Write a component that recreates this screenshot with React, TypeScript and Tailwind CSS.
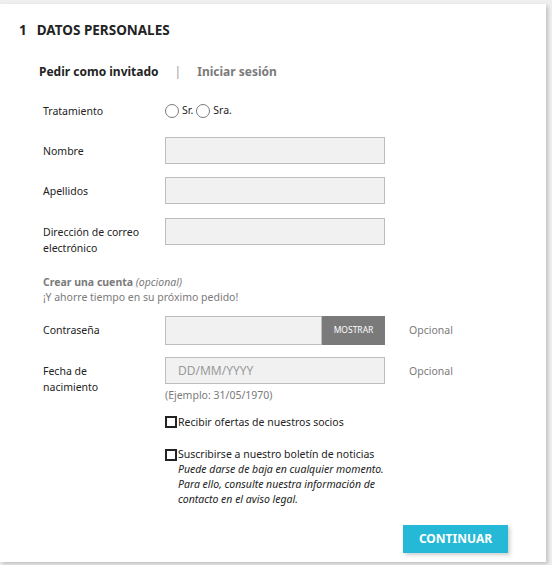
import React from 'react';

const font = { fontFamily: '"Noto Sans", "Open Sans", sans-serif' };

function Row({ label, children, extra, className = '' }: { label: React.ReactNode; children: React.ReactNode; extra?: React.ReactNode; className?: string }) {
  return (
    <div className={`flex items-start ${className}`}>
      <div className="w-[122px] shrink-0 pt-[6px] text-[10.5px] leading-[16px] text-[#232323]">{label}</div>
      <div className="w-[220px] shrink-0">{children}</div>
      {extra ? <div className="pl-[24px] pt-[6px] text-[10.5px] leading-[16px] text-[#7a7a7a]">{extra}</div> : null}
    </div>
  );
}

function Field({ placeholder }: { placeholder?: string }) {
  return (
    <div className="flex h-[27px] w-[220px] items-center border border-[#bdbdbd] bg-[#f1f1f1] px-[12px] text-[12px] text-[#9a9a9a]">
      {placeholder}
    </div>
  );
}

function Radio({ label }: { label: string }) {
  return (
    <span className="flex items-center">
      <span className="h-[14px] w-[14px] rounded-full border-[1.5px] border-[#7a7a7a] bg-white" />
      <span className="ml-[3px] text-[10.5px] text-[#232323]">{label}</span>
    </span>
  );
}

function Check() {
  return <span className="mt-[2px] inline-block h-[12px] w-[12px] shrink-0 border-2 border-[#232323] bg-white" />;
}

export default function App() {
  return (
    <div className="min-h-[565px] w-[552px] bg-[#efefef] pt-[4px]" style={font}>
      <div className="h-[558px] w-[546px] bg-white pl-[19px] pt-[16px] shadow-[2px_2px_4px_rgba(0,0,0,0.2)]">
        <h1 className="flex items-center text-[13.5px] font-bold leading-[20px] text-[#232323]">
          <span>1</span>
          <span className="ml-[10px]">DATOS PERSONALES</span>
        </h1>

        <div className="mt-[22px] flex items-center pl-[20px] text-[12px] font-bold leading-[20px]">
          <span className="text-[#232323]">Pedir como invitado</span>
          <span className="mx-[16px] font-normal text-[#9a9a9a]">|</span>
          <span className="text-[#7a7a7a]">Iniciar sesión</span>
        </div>

        <div className="pl-[24px]">
          <div className="mt-[21px] flex items-center">
            <div className="w-[122px] text-[10.5px] leading-[16px] text-[#232323]">Tratamiento</div>
            <div className="flex items-center gap-[3px]">
              <Radio label="Sr." />
              <Radio label="Sra." />
            </div>
          </div>

          <Row label="Nombre" className="mt-[18px]">
            <Field />
          </Row>
          <Row label="Apellidos" className="mt-[13px]">
            <Field />
          </Row>
          <Row label={<>Dirección de correo<br />electrónico</>} className="mt-[14px]">
            <Field />
          </Row>

          <div className="mt-[19px] text-[10.5px] leading-[15px] text-[#7a7a7a]">
            <div>
              <span className="font-bold">Crear una cuenta</span> <em>(opcional)</em>
            </div>
            <div>¡Y ahorre tiempo en su próximo pedido!</div>
          </div>

          <Row label="Contraseña" extra="Opcional" className="mt-[11px]">
            <div className="flex h-[29px] w-[220px]">
              <div className="flex-1 border border-[#bdbdbd] bg-[#f1f1f1]" />
              <div className="flex w-[63px] items-center justify-center bg-[#7a7a7a] text-[8.5px] text-white">MOSTRAR</div>
            </div>
          </Row>

          <Row label={<>Fecha de<br />nacimiento</>} extra="Opcional" className="mt-[12px]">
            <Field placeholder="DD/MM/YYYY" />
            <div className="mt-[4px] text-[10.5px] leading-[14px] text-[#7a7a7a]">(Ejemplo: 31/05/1970)</div>
          </Row>

          <div className="ml-[122px] mt-[12px] flex items-start gap-[1px] text-[10.5px] leading-[16px] text-[#232323]">
            <Check />
            <span>Recibir ofertas de nuestros socios</span>
          </div>

          <div className="ml-[122px] mt-[17px] flex items-start gap-[1px] text-[10.5px] leading-[15px] text-[#232323]">
            <Check />
            <div>
              <div>Suscribirse a nuestro boletín de noticias</div>
              <em className="block w-[220px]">
                Puede darse de baja en cualquier momento. Para ello, consulte nuestra información de contacto en el aviso legal.
              </em>
            </div>
          </div>

          <div className="mt-[18px] flex w-[465px] justify-end">
            <button className="h-[28px] w-[105px] bg-[#25b9d7] text-[12px] font-bold text-white shadow-[2px_2px_4px_rgba(0,0,0,0.2)]">
              CONTINUAR
            </button>
          </div>
        </div>
      </div>
    </div>
  );
}
